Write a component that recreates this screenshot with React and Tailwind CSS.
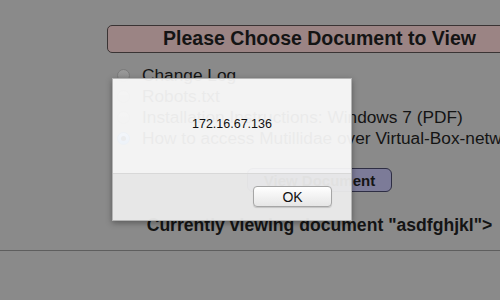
import React from 'react';

const options = [
  { label: 'Change Log', checked: false },
  { label: 'Robots.txt', checked: false },
  { label: 'Installation Instructions: Windows 7 (PDF)', checked: false },
  { label: 'How to access Mutillidae over Virtual-Box-network', checked: true },
];

function Radio({ checked }) {
  return (
    <span
      className={
        checked
          ? 'w-[13px] h-[13px] rounded-full border border-[#3d6fb5] bg-gradient-to-b from-[#8fb8ef] to-[#3b7fd9] flex items-center justify-center shrink-0'
          : 'w-[13px] h-[13px] rounded-full border border-[#7a7a7a] bg-gradient-to-b from-[#9a9a9a] to-[#8c8c8c] shrink-0'
      }
    >
      {checked && <span className="w-[5px] h-[5px] rounded-full bg-[#1d2b3d]" />}
    </span>
  );
}

export default function App() {
  return (
    <div
      className="relative w-[500px] h-[300px] overflow-hidden bg-[#8a8a8a] text-[#141414]"
      style={{ fontFamily: '"Liberation Sans", Arial, sans-serif' }}
    >
      {/* page content */}
      <div className="pt-[25px] pl-[107px]">
        <div className="w-[425px] flex flex-col items-center">
          <div className="w-full h-[28px] rounded-[5px] border border-[#3a3434] bg-[#9b8484] flex items-center justify-center">
            <span className="text-[19.5px] font-bold leading-none">Please Choose Document to View</span>
          </div>

          <div className="w-full mt-[12px] pl-[10px] flex flex-col">
            {options.map((o) => (
              <label key={o.label} className="h-[21px] flex items-center gap-[12px] whitespace-nowrap">
                <Radio checked={o.checked} />
                <span className="text-[17.3px] leading-[21px]">{o.label}</span>
              </label>
            ))}
          </div>

          <button className="mt-[19px] w-[145px] h-[24px] rounded-[6px] border border-[#2e2e44] bg-[#7c7b98] text-[15px] font-bold leading-none">
            View Document
          </button>

          <div className="mt-[23px] text-[17.6px] font-bold leading-[20px] whitespace-nowrap">
            Currently viewing document "asdfghjkl"&gt;
          </div>
        </div>
      </div>
      <div className="mt-[15px] h-px bg-[#5e5e5e]" />

      {/* alert dialog */}
      <div className="absolute left-[112px] top-[78px] w-[240px] h-[143px] border border-[#b4b4b4] shadow-[0_2px_6px_rgba(0,0,0,0.35)] flex flex-col">
        <div className="h-[94px] bg-[#fbfbfb]/[0.93] flex justify-center pt-[39px]">
          <span className="text-[12.5px] leading-none text-[#111]">172.16.67.136</span>
        </div>
        <div className="flex-1 bg-[#ececec]/[0.95] border-t border-[#d8d8d8] flex justify-end items-start pt-[12px] pr-[19px]">
          <button className="w-[79px] h-[21px] rounded-[4px] border border-[#a6a6a6] bg-gradient-to-b from-[#ffffff] to-[#e6e6e6] shadow-[0_1px_1px_rgba(0,0,0,0.15)] text-[14px] leading-none text-[#111]">
            OK
          </button>
        </div>
      </div>
    </div>
  );
}
